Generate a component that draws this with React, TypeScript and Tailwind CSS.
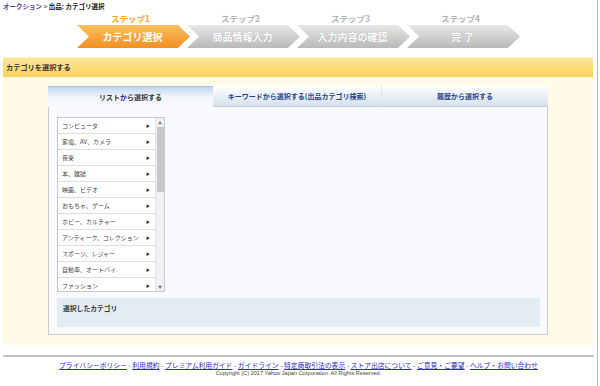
import { useState } from "react"

const steps = [
  { label: "ステップ1", title: "カテゴリ選択" },
  { label: "ステップ2", title: "商品情報入力" },
  { label: "ステップ3", title: "入力内容の確認" },
  { label: "ステップ4", title: "完 了" },
]

const tabs = ["リストから選択する", "キーワードから選択する(出品カテゴリ検索)", "履歴から選択する"]

const categories = [
  "コンピュータ",
  "家電、AV、カメラ",
  "音楽",
  "本、雑誌",
  "映画、ビデオ",
  "おもちゃ、ゲーム",
  "ホビー、カルチャー",
  "アンティーク、コレクション",
  "スポーツ、レジャー",
  "自動車、オートバイ",
  "ファッション",
]

const footerLinks = [
  "プライバシーポリシー",
  "利用規約",
  "プレミアム利用ガイド",
  "ガイドライン",
  "特定商取引法の表示",
  "ストア出店について",
  "ご意見・ご要望",
  "ヘルプ・お問い合わせ",
]

const font = { fontFamily: '"Noto Sans CJK JP", "Noto Sans", sans-serif' }

function StepArrow({ label, title, active }: { label: string; title: string; active: boolean }) {
  return (
    <div className="flex flex-col w-[113px] -ml-[3px] first:ml-0">
      <div
        className={`h-[11px] pr-[6px] text-center text-[8.5px] leading-[11px] font-bold ${
          active ? "text-[#f5a623]" : "text-[#b4b4b4]"
        }`}
      >
        {label}
      </div>
      <div
        className={`h-[23px] mt-[1px] flex items-center justify-center pr-[2px] text-[10px] font-bold text-white [clip-path:polygon(0_0,calc(100%-12px)_0,100%_50%,calc(100%-12px)_100%,0_100%,12px_50%)] ${
          active
            ? "bg-gradient-to-b from-[#fcbf5e] to-[#f1901b]"
            : "bg-gradient-to-b from-[#e8e8e8] to-[#b9b9b9] [text-shadow:0_0_1px_#999]"
        }`}
      >
        {title}
      </div>
    </div>
  )
}

export default function App() {
  const [activeTab, setActiveTab] = useState(0)

  return (
    <div className="w-[600px] h-[386px] flex bg-white overflow-hidden" style={font}>
      <div className="w-[597px] flex flex-col">
        {/* Breadcrumb */}
        <div className="h-[13px] pl-[3px] pt-[2px] text-[6.5px] leading-[9px] font-bold">
          <span className="text-[#6633aa]">オークション</span>
          <span className="text-[#666]"> &gt; </span>
          <span className="text-[#111]">出品: カテゴリ選択</span>
        </div>

        {/* Steps */}
        <div className="h-[44px] flex pl-[77px]">
          {steps.map((s, i) => (
            <StepArrow key={s.label} label={s.label} title={s.title} active={i === 0} />
          ))}
        </div>

        {/* Section */}
        <div className="mx-[3px] w-[590px] flex flex-col">
          <div className="h-[20px] flex items-center pl-[3px] text-[7.2px] font-bold text-[#333] bg-gradient-to-b from-[#fde79a] to-[#fbd25a] border-t border-[#fff0c0]">
            カテゴリを選択する
          </div>

          <div className="bg-[#fffbe6] pl-[45px] pr-[45px] pt-[9px] pb-[10px]">
            {/* Tabs */}
            <div className="flex h-[21px]">
              {tabs.map((t, i) => (
                <button
                  key={t}
                  onClick={() => setActiveTab(i)}
                  className={`flex items-center justify-center text-[7px] font-bold ${
                    i === 0 ? "w-[165px]" : i === 1 ? "w-[168px]" : "w-[167px]"
                  } ${
                    activeTab === i
                      ? "bg-gradient-to-b from-[#c3d6ee] via-[#f0f5fc] to-[#f9fbfe] text-[#333] border-t border-[#a8c2e2]"
                      : "bg-gradient-to-b from-[#ffffff] to-[#d6e0ee] text-[#24418a] border-b border-[#c4cfdd]"
                  } ${i === 2 ? "border-l border-l-[#dde4ee]" : ""}`}
                >
                  {t}
                </button>
              ))}
            </div>

            {/* Panel */}
            <div className="h-[228px] bg-[#f8fafd] border-x border-b border-[#c9ccd2] pl-[8px] pr-[7px] pt-[10px] flex flex-col">
              <div className="w-[108px] h-[175px] flex border border-[#c8c8c8] bg-white">
                <div className="flex-1 overflow-hidden">
                  {categories.map((c) => (
                    <div
                      key={c}
                      className="h-[16px] shrink-0 flex items-center justify-between pl-[4px] pr-[5px] border-b border-[#dcdcdc] text-[6px] text-[#444]"
                    >
                      <span>{c}</span>
                      <span className="text-[4px] text-[#333]">▶</span>
                    </div>
                  ))}
                </div>
                <div className="w-[9px] bg-[#f0f0f0] border-l border-[#e2e2e2] flex flex-col items-center">
                  <div className="h-[9px] flex items-center justify-center text-[4px] text-[#777]">▲</div>
                  <div className="w-[7px] h-[65px] bg-[#c6c6c6]" />
                  <div className="flex-1" />
                  <div className="h-[9px] flex items-center justify-center text-[4px] text-[#777]">▼</div>
                </div>
              </div>

              <div className="mt-[6px] h-[29px] bg-[#e3ebf4] pl-[6px] pt-[5px] text-[6.8px] font-bold text-[#333]">
                選択したカテゴリ
              </div>
            </div>
          </div>
        </div>

        {/* Footer */}
        <div className="mt-[10px] mx-[3px] h-[2px] bg-[#c4c4c4]" />
        <div className="pt-[4px] text-center text-[6.8px] leading-[9px] whitespace-nowrap">
          {footerLinks.map((l, i) => (
            <span key={l}>
              {i > 0 && <span className="text-[#555]"> - </span>}
              <a href="#" className="text-[#2a2ad0] underline">
                {l}
              </a>
            </span>
          ))}
        </div>
        <div
          className="text-center text-[5.6px] leading-[7px] text-[#444]"
          style={{ fontFamily: '"Liberation Sans", sans-serif' }}
        >
          Copyright (C) 2017 Yahoo Japan Corporation. All Rights Reserved.
        </div>
      </div>
      <div className="w-px bg-[#a9bcd2]" />
      <div className="w-[2px] bg-white" />
    </div>
  )
}
